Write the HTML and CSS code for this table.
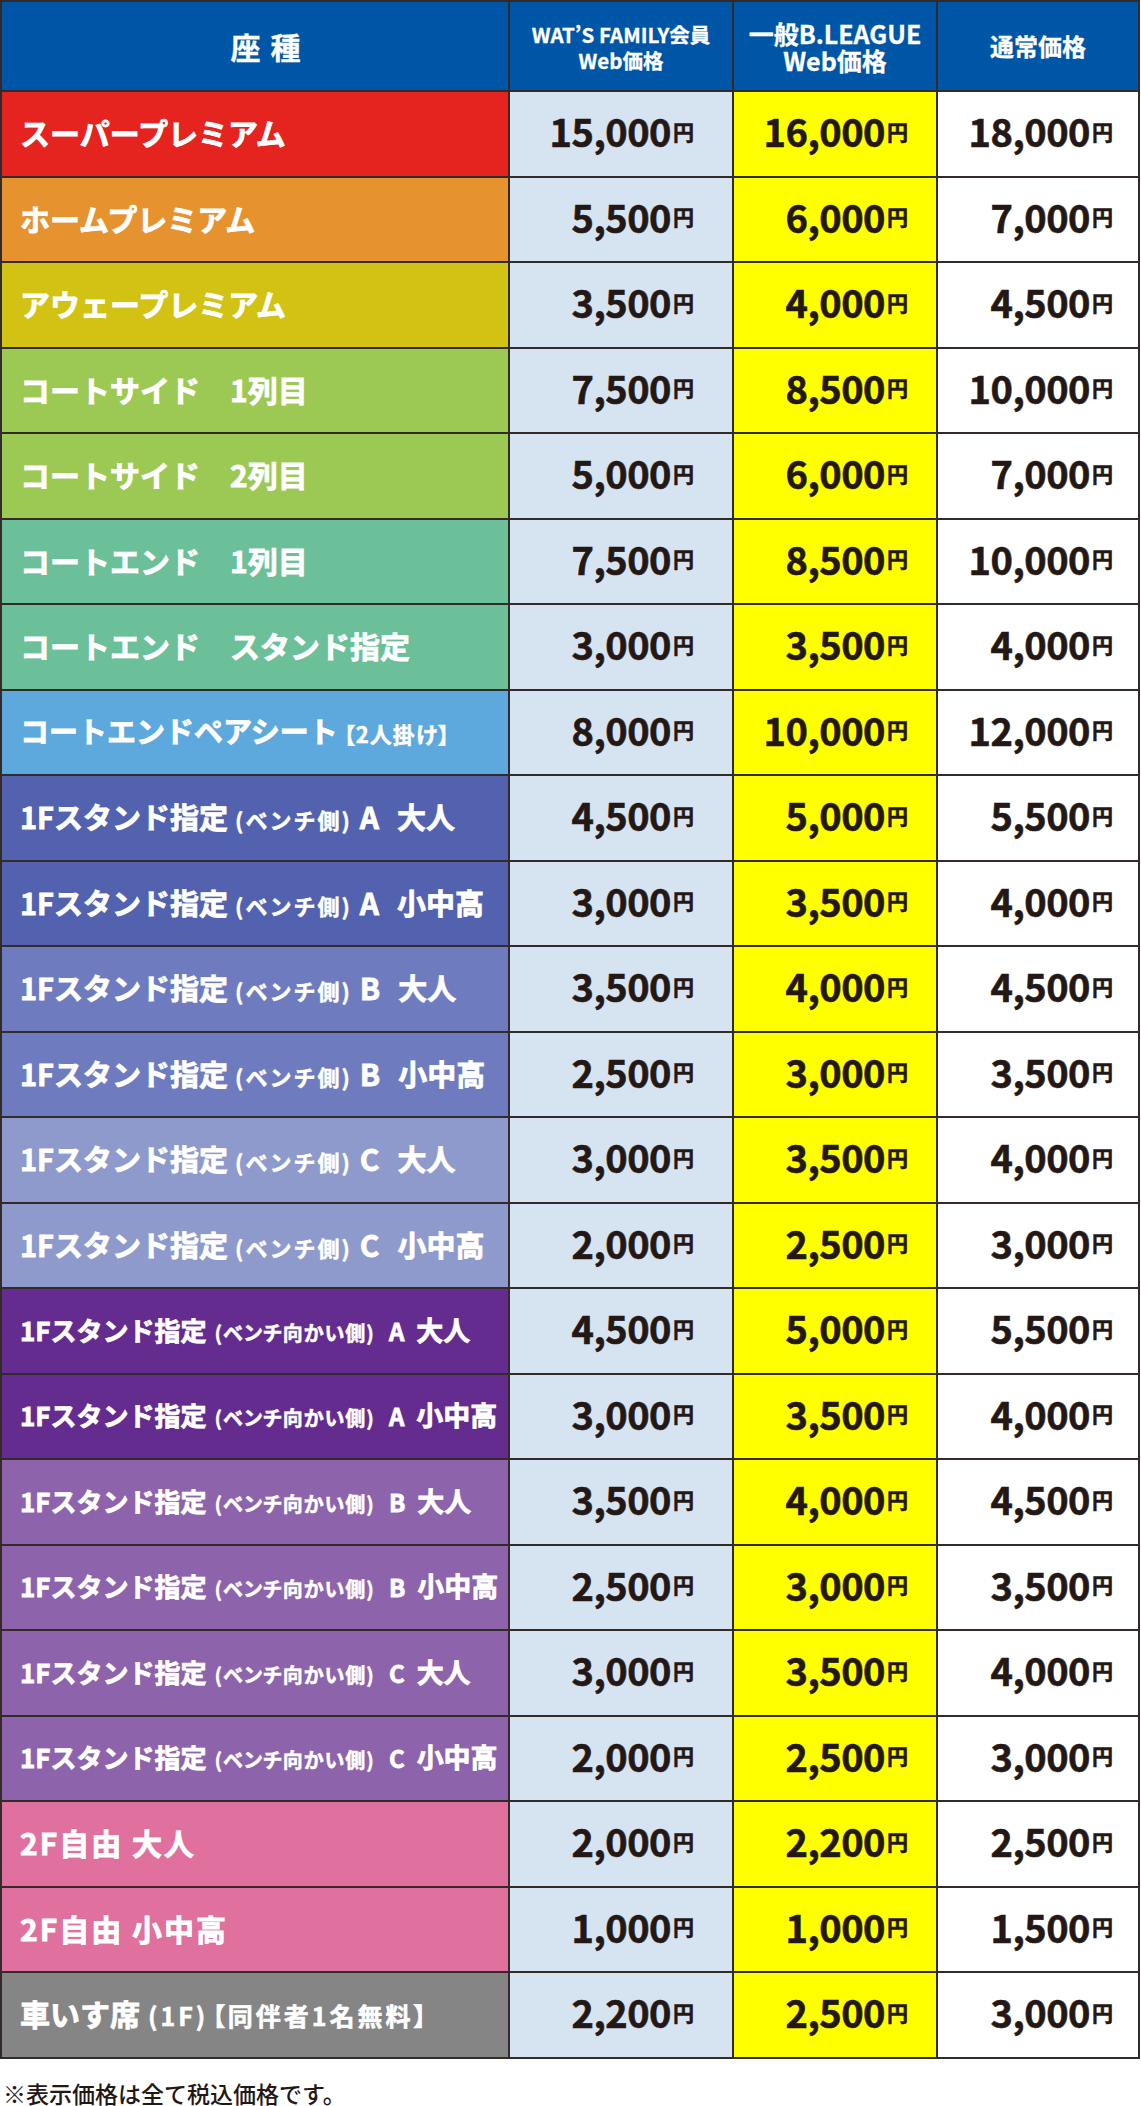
FILE: index.html
```html
<!DOCTYPE html>
<html lang="ja">
<head>
<meta charset="utf-8">
<title>座種・価格表</title>
<link rel="stylesheet" href="styles.css">
</head>
<body>
<div class="price-table">
  <div class="cell head head-seat"><span class="line">座 種</span></div>
  <div class="cell head head-family"><div class="lines"><span class="line">WAT’S FAMILY会員</span><span class="line">Web価格</span></div></div>
  <div class="cell head head-league"><div class="lines"><span class="line">一般B.LEAGUE</span><span class="line">Web価格</span></div></div>
  <div class="cell head head-normal"><span class="line">通常価格</span></div>

  <div class="cell label c-super"><span class="txt">スーパープレミアム</span></div>
  <div class="cell price p-fam"><span class="num">15,000</span><span class="yen">円</span></div>
  <div class="cell price p-lg"><span class="num">16,000</span><span class="yen">円</span></div>
  <div class="cell price p-std"><span class="num">18,000</span><span class="yen">円</span></div>

  <div class="cell label c-home"><span class="txt">ホームプレミアム</span></div>
  <div class="cell price p-fam"><span class="num">5,500</span><span class="yen">円</span></div>
  <div class="cell price p-lg"><span class="num">6,000</span><span class="yen">円</span></div>
  <div class="cell price p-std"><span class="num">7,000</span><span class="yen">円</span></div>

  <div class="cell label c-away"><span class="txt">アウェープレミアム</span></div>
  <div class="cell price p-fam"><span class="num">3,500</span><span class="yen">円</span></div>
  <div class="cell price p-lg"><span class="num">4,000</span><span class="yen">円</span></div>
  <div class="cell price p-std"><span class="num">4,500</span><span class="yen">円</span></div>

  <div class="cell label c-side"><span class="txt">コートサイド　1列目</span></div>
  <div class="cell price p-fam"><span class="num">7,500</span><span class="yen">円</span></div>
  <div class="cell price p-lg"><span class="num">8,500</span><span class="yen">円</span></div>
  <div class="cell price p-std"><span class="num">10,000</span><span class="yen">円</span></div>

  <div class="cell label c-side"><span class="txt">コートサイド　2列目</span></div>
  <div class="cell price p-fam"><span class="num">5,000</span><span class="yen">円</span></div>
  <div class="cell price p-lg"><span class="num">6,000</span><span class="yen">円</span></div>
  <div class="cell price p-std"><span class="num">7,000</span><span class="yen">円</span></div>

  <div class="cell label c-end"><span class="txt">コートエンド　1列目</span></div>
  <div class="cell price p-fam"><span class="num">7,500</span><span class="yen">円</span></div>
  <div class="cell price p-lg"><span class="num">8,500</span><span class="yen">円</span></div>
  <div class="cell price p-std"><span class="num">10,000</span><span class="yen">円</span></div>

  <div class="cell label c-end"><span class="txt">コートエンド　スタンド指定</span></div>
  <div class="cell price p-fam"><span class="num">3,000</span><span class="yen">円</span></div>
  <div class="cell price p-lg"><span class="num">3,500</span><span class="yen">円</span></div>
  <div class="cell price p-std"><span class="num">4,000</span><span class="yen">円</span></div>

  <div class="cell label c-pair"><span class="txt pair">コートエンドペアシート<span class="note-sm">【2人掛け】</span></span></div>
  <div class="cell price p-fam"><span class="num">8,000</span><span class="yen">円</span></div>
  <div class="cell price p-lg"><span class="num">10,000</span><span class="yen">円</span></div>
  <div class="cell price p-std"><span class="num">12,000</span><span class="yen">円</span></div>

  <div class="cell label c-bench-a"><span class="txt bench">1Fスタンド指定<span class="paren">(ベンチ側)</span><span class="grade">A</span><span class="tail">大人</span></span></div>
  <div class="cell price p-fam"><span class="num">4,500</span><span class="yen">円</span></div>
  <div class="cell price p-lg"><span class="num">5,000</span><span class="yen">円</span></div>
  <div class="cell price p-std"><span class="num">5,500</span><span class="yen">円</span></div>

  <div class="cell label c-bench-a"><span class="txt bench">1Fスタンド指定<span class="paren">(ベンチ側)</span><span class="grade">A</span><span class="tail">小中高</span></span></div>
  <div class="cell price p-fam"><span class="num">3,000</span><span class="yen">円</span></div>
  <div class="cell price p-lg"><span class="num">3,500</span><span class="yen">円</span></div>
  <div class="cell price p-std"><span class="num">4,000</span><span class="yen">円</span></div>

  <div class="cell label c-bench-b"><span class="txt bench">1Fスタンド指定<span class="paren">(ベンチ側)</span><span class="grade">B</span><span class="tail">大人</span></span></div>
  <div class="cell price p-fam"><span class="num">3,500</span><span class="yen">円</span></div>
  <div class="cell price p-lg"><span class="num">4,000</span><span class="yen">円</span></div>
  <div class="cell price p-std"><span class="num">4,500</span><span class="yen">円</span></div>

  <div class="cell label c-bench-b"><span class="txt bench">1Fスタンド指定<span class="paren">(ベンチ側)</span><span class="grade">B</span><span class="tail">小中高</span></span></div>
  <div class="cell price p-fam"><span class="num">2,500</span><span class="yen">円</span></div>
  <div class="cell price p-lg"><span class="num">3,000</span><span class="yen">円</span></div>
  <div class="cell price p-std"><span class="num">3,500</span><span class="yen">円</span></div>

  <div class="cell label c-bench-c"><span class="txt bench">1Fスタンド指定<span class="paren">(ベンチ側)</span><span class="grade">C</span><span class="tail">大人</span></span></div>
  <div class="cell price p-fam"><span class="num">3,000</span><span class="yen">円</span></div>
  <div class="cell price p-lg"><span class="num">3,500</span><span class="yen">円</span></div>
  <div class="cell price p-std"><span class="num">4,000</span><span class="yen">円</span></div>

  <div class="cell label c-bench-c"><span class="txt bench">1Fスタンド指定<span class="paren">(ベンチ側)</span><span class="grade">C</span><span class="tail">小中高</span></span></div>
  <div class="cell price p-fam"><span class="num">2,000</span><span class="yen">円</span></div>
  <div class="cell price p-lg"><span class="num">2,500</span><span class="yen">円</span></div>
  <div class="cell price p-std"><span class="num">3,000</span><span class="yen">円</span></div>

  <div class="cell label c-opp-a"><span class="txt opp">1Fスタンド指定<span class="paren">(ベンチ向かい側)</span><span class="grade">A</span><span class="tail">大人</span></span></div>
  <div class="cell price p-fam"><span class="num">4,500</span><span class="yen">円</span></div>
  <div class="cell price p-lg"><span class="num">5,000</span><span class="yen">円</span></div>
  <div class="cell price p-std"><span class="num">5,500</span><span class="yen">円</span></div>

  <div class="cell label c-opp-a"><span class="txt opp">1Fスタンド指定<span class="paren">(ベンチ向かい側)</span><span class="grade">A</span><span class="tail">小中高</span></span></div>
  <div class="cell price p-fam"><span class="num">3,000</span><span class="yen">円</span></div>
  <div class="cell price p-lg"><span class="num">3,500</span><span class="yen">円</span></div>
  <div class="cell price p-std"><span class="num">4,000</span><span class="yen">円</span></div>

  <div class="cell label c-opp-b"><span class="txt opp">1Fスタンド指定<span class="paren">(ベンチ向かい側)</span><span class="grade">B</span><span class="tail">大人</span></span></div>
  <div class="cell price p-fam"><span class="num">3,500</span><span class="yen">円</span></div>
  <div class="cell price p-lg"><span class="num">4,000</span><span class="yen">円</span></div>
  <div class="cell price p-std"><span class="num">4,500</span><span class="yen">円</span></div>

  <div class="cell label c-opp-b"><span class="txt opp">1Fスタンド指定<span class="paren">(ベンチ向かい側)</span><span class="grade">B</span><span class="tail">小中高</span></span></div>
  <div class="cell price p-fam"><span class="num">2,500</span><span class="yen">円</span></div>
  <div class="cell price p-lg"><span class="num">3,000</span><span class="yen">円</span></div>
  <div class="cell price p-std"><span class="num">3,500</span><span class="yen">円</span></div>

  <div class="cell label c-opp-c"><span class="txt opp">1Fスタンド指定<span class="paren">(ベンチ向かい側)</span><span class="grade">C</span><span class="tail">大人</span></span></div>
  <div class="cell price p-fam"><span class="num">3,000</span><span class="yen">円</span></div>
  <div class="cell price p-lg"><span class="num">3,500</span><span class="yen">円</span></div>
  <div class="cell price p-std"><span class="num">4,000</span><span class="yen">円</span></div>

  <div class="cell label c-opp-c"><span class="txt opp">1Fスタンド指定<span class="paren">(ベンチ向かい側)</span><span class="grade">C</span><span class="tail">小中高</span></span></div>
  <div class="cell price p-fam"><span class="num">2,000</span><span class="yen">円</span></div>
  <div class="cell price p-lg"><span class="num">2,500</span><span class="yen">円</span></div>
  <div class="cell price p-std"><span class="num">3,000</span><span class="yen">円</span></div>

  <div class="cell label c-2f"><span class="txt free">2F自由 大人</span></div>
  <div class="cell price p-fam"><span class="num">2,000</span><span class="yen">円</span></div>
  <div class="cell price p-lg"><span class="num">2,200</span><span class="yen">円</span></div>
  <div class="cell price p-std"><span class="num">2,500</span><span class="yen">円</span></div>

  <div class="cell label c-2f"><span class="txt free">2F自由 小中高</span></div>
  <div class="cell price p-fam"><span class="num">1,000</span><span class="yen">円</span></div>
  <div class="cell price p-lg"><span class="num">1,000</span><span class="yen">円</span></div>
  <div class="cell price p-std"><span class="num">1,500</span><span class="yen">円</span></div>

  <div class="cell label c-wheel"><span class="txt">車いす席<span class="sub">(1F)</span><span class="sub br">【同伴者1名無料】</span></span></div>
  <div class="cell price p-fam"><span class="num">2,200</span><span class="yen">円</span></div>
  <div class="cell price p-lg"><span class="num">2,500</span><span class="yen">円</span></div>
  <div class="cell price p-std"><span class="num">3,000</span><span class="yen">円</span></div>
</div>
<p class="note">※表示価格は全て税込価格です。</p>
</body>
</html>
```

FILE: styles.css
```css
html, body {
  margin: 0;
  padding: 0;
  background: #ffffff;
}

body {
  font-family: "Noto Sans CJK JP", "Noto Sans", sans-serif;
  color: #231815;
}

.price-table {
  display: grid;
  grid-template-columns: 506px 222px 202px 200px;
  grid-template-rows: 88px;
  grid-auto-rows: 83.5px;
  gap: 2px;
  padding: 2px;
  width: fit-content;
  background: #332b29;
}

.cell {
  display: flex;
  align-items: center;
  line-height: 1;
  white-space: nowrap;
  font-weight: 700;
  overflow: hidden;
}

/* header */
.head {
  background: #0056a6;
  color: #ffffff;
  justify-content: center;
  text-align: center;
  -webkit-text-stroke: 0.3px #ffffff;
}

.head .lines {
  display: flex;
  flex-direction: column;
  align-items: center;
  gap: 4px;
  padding-top: 2px;
}

.head .line {
  display: block;
  line-height: 1;
}

.head-seat {
  font-size: 30px;
  padding-left: 21px;
  word-spacing: 3px;
}

.head-family {
  font-size: 20.5px;
}

.head-family .lines {
  gap: 6px;
}

.head-league {
  font-size: 25px;
}

.head-league .lines {
  gap: 2px;
}

.head-normal {
  font-size: 24px;
}

/* seat labels */
.label {
  color: #ffffff;
  font-size: 30px;
  padding: 0 0 3px 18px;
  -webkit-text-stroke: 0.8px #ffffff;
}

.txt.pair {
  font-size: 29px;
}

.note-sm {
  font-size: 22px;
  letter-spacing: 1px;
  margin-left: 6px;
  font-feature-settings: "palt";
  -webkit-text-stroke: 0.5px #ffffff;
}

.txt.bench {
  font-size: 29px;
}

.txt.bench .paren {
  font-size: 22px;
  letter-spacing: 2px;
  margin-left: 7px;
  -webkit-text-stroke: 0.5px #ffffff;
}

.txt.bench .grade {
  font-size: 30px;
  margin-left: 8px;
}

.txt.bench .tail {
  margin-left: 18px;
}

.txt.opp {
  font-size: 26px;
}

.txt.opp .paren {
  font-size: 20px;
  letter-spacing: 1px;
  margin-left: 8px;
  font-feature-settings: "palt";
  -webkit-text-stroke: 0.5px #ffffff;
}

.txt.opp .grade {
  font-size: 24px;
  margin-left: 14px;
}

.txt.opp .tail {
  font-size: 27px;
  margin-left: 12px;
}

.txt.free {
  letter-spacing: 2px;
}

.sub {
  font-size: 25px;
  letter-spacing: 3px;
  margin-left: 8px;
  -webkit-text-stroke: 0.6px #ffffff;
}

.sub.br {
  font-feature-settings: "palt";
  margin-left: 4px;
}

.c-super  { background: #e5231f; }
.c-home   { background: #e6932f; }
.c-away   { background: #d2c213; }
.c-side   { background: #9cc854; }
.c-end    { background: #6bbf99; }
.c-pair   { background: #5da9de; }
.c-bench-a { background: #5262ae; }
.c-bench-b { background: #6e7cbf; }
.c-bench-c { background: #8e9acb; }
.c-opp-a  { background: #652c8f; }
.c-opp-b  { background: #8d63ab; }
.c-opp-c  { background: #8d63ab; }
.c-2f     { background: #e0709d; }
.c-wheel  { background: #858585; }

/* prices */
.price {
  justify-content: flex-end;
  padding-bottom: 5px;
  color: #231815;
  -webkit-text-stroke: 0.6px #231815;
}

.p-fam { background: #d6e4f2; padding-right: 38px; }
.p-lg  { background: #ffff00; padding-right: 28px; }
.p-std { background: #ffffff; padding-right: 25px; }

.num {
  font-size: 38px;
  letter-spacing: -0.5px;
}

.yen {
  font-size: 21px;
  margin-left: 2px;
}

.note {
  margin: 20px 0 0 3px;
  font-size: 23px;
  line-height: 28px;
  font-weight: 500;
  color: #231815;
}
```
